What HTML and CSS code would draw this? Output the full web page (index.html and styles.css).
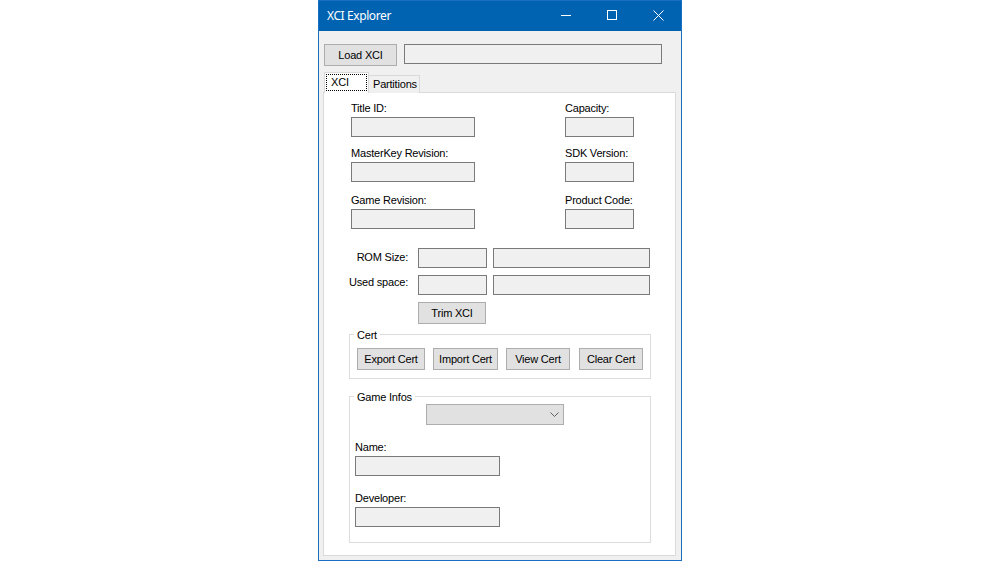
FILE: index.html
```html
<!DOCTYPE html>
<html>
<head>
<meta charset="utf-8">
<title>XCI Explorer</title>
<link rel="stylesheet" href="styles.css">
</head>
<body>
<div class="window">
  <div class="titlebar">
    <span class="title">XCI Explorer</span>
    <div class="caption">
      <span class="cap-btn"><svg width="10" height="10" viewBox="0 0 10 10"><path d="M0 5.5H10" stroke="#fff" stroke-width="1"/></svg></span>
      <span class="cap-btn"><svg width="10" height="10" viewBox="0 0 10 10"><rect x="0.5" y="0.5" width="9" height="9" fill="none" stroke="#fff" stroke-width="1"/></svg></span>
      <span class="cap-btn"><svg width="11" height="11" viewBox="0 0 11 11"><path d="M0.5 0.5L10.5 10.5M10.5 0.5L0.5 10.5" stroke="#fff" stroke-width="1"/></svg></span>
    </div>
  </div>
  <div class="client">
    <div class="toprow">
      <button class="btn btn-load">Load XCI</button>
      <div class="textbox tb-path"></div>
    </div>
    <div class="tabs">
      <div class="tab tab-active"><span class="focus">XCI</span></div>
      <div class="tab tab-inactive">Partitions</div>
    </div>
    <div class="panel">
      <div class="fields">
        <div class="col col-left">
          <div class="field"><label>Title ID:</label><div class="textbox"></div></div>
          <div class="field field-2"><label>MasterKey Revision:</label><div class="textbox"></div></div>
          <div class="field field-3"><label>Game Revision:</label><div class="textbox"></div></div>
        </div>
        <div class="col col-right">
          <div class="field"><label>Capacity:</label><div class="textbox"></div></div>
          <div class="field field-2"><label>SDK Version:</label><div class="textbox"></div></div>
          <div class="field field-3"><label>Product Code:</label><div class="textbox"></div></div>
        </div>
      </div>
      <div class="sizes">
        <div class="size-row">
          <span class="size-label label-rom">ROM Size:</span>
          <div class="textbox tb-s"></div>
          <div class="textbox tb-l"></div>
        </div>
        <div class="size-row size-row-2">
          <span class="size-label label-used">Used space:</span>
          <div class="textbox tb-s"></div>
          <div class="textbox tb-l"></div>
        </div>
        <button class="btn btn-trim">Trim XCI</button>
      </div>
      <fieldset class="group group-cert">
        <legend>Cert</legend>
        <div class="cert-buttons">
          <button class="btn btn-export">Export Cert</button>
          <button class="btn btn-import">Import Cert</button>
          <button class="btn btn-view">View Cert</button>
          <button class="btn btn-clear">Clear Cert</button>
        </div>
      </fieldset>
      <fieldset class="group group-game">
        <legend>Game Infos</legend>
        <div class="combo">
          <svg width="9" height="5" viewBox="0 0 9 5"><path d="M0.5 0.5L4.5 4.5L8.5 0.5" fill="none" stroke="#606060" stroke-width="1"/></svg>
        </div>
        <div class="info-field"><label>Name:</label><div class="textbox tb-info"></div></div>
        <div class="info-field info-field-2"><label>Developer:</label><div class="textbox tb-info"></div></div>
      </fieldset>
    </div>
  </div>
</div>
</body>
</html>
```

FILE: styles.css
```css
html, body {
  margin: 0;
  padding: 0;
}

body {
  background: #ffffff;
  display: flex;
  justify-content: center;
  font-family: "Liberation Sans", Arial, sans-serif;
  font-size: 11px;
  letter-spacing: -0.2px;
  color: #000;
}

.window {
  width: 364px;
  height: 561px;
  box-sizing: border-box;
  border: 1px solid #1a6fc4;
  display: flex;
  flex-direction: column;
}

.titlebar {
  height: 30px;
  flex: none;
  background: #0063b1;
  display: flex;
  color: #fff;
}

.title {
  flex: 1;
  padding-left: 8px;
  line-height: 30px;
  font-family: "Noto Sans", "Open Sans", sans-serif;
  font-size: 12px;
  letter-spacing: -0.4px;
}

.caption {
  display: flex;
}

.cap-btn {
  width: 46px;
  height: 30px;
  box-sizing: border-box;
  padding-top: 9px;
  display: flex;
  justify-content: center;
  align-items: flex-start;
}

.client {
  flex: 1;
  background: #f0f0f0;
  padding: 13px 0 0 4px;
}

.toprow {
  display: flex;
  align-items: flex-start;
  margin-left: 1px;
}

.btn {
  font-family: "Liberation Sans", Arial, sans-serif;
  font-size: 11px;
  letter-spacing: -0.2px;
  color: #000;
  background: #e1e1e1;
  border: 1px solid #adadad;
  box-sizing: border-box;
  padding: 0;
  margin: 0;
  height: 22px;
  line-height: 13px;
}

.btn-load {
  width: 73px;
}

.textbox {
  box-sizing: border-box;
  border: 1px solid #7a7a7a;
  background: #f0f0f0;
  height: 20px;
}

.tb-path {
  width: 258px;
  margin-left: 7px;
}

.tabs {
  display: flex;
  align-items: flex-end;
  margin: 6px 0 0 1px;
  height: 21px;
}

.tab {
  box-sizing: border-box;
  line-height: 13px;
}

.tab-active {
  position: relative;
  z-index: 1;
  width: 45px;
  height: 21px;
  border: 1px solid #d9d9d9;
  border-bottom: none;
  background: #fff;
  padding: 1px 1px 0 1px;
}

.focus {
  display: block;
  height: 17px;
  box-sizing: border-box;
  border: 1px dotted #000;
  padding-left: 4px;
  line-height: 14px;
}

.tab-inactive {
  width: 51px;
  height: 18px;
  border: 1px solid #d9d9d9;
  border-left: none;
  border-bottom: none;
  background: #f0f0f0;
  padding: 2px 0 0 4px;
}

.panel {
  margin-top: -1px;
  width: 353px;
  height: 464px;
  box-sizing: border-box;
  border: 1px solid #dadada;
  background: #fff;
  padding-top: 8px;
}

.fields {
  display: flex;
  gap: 90px;
  margin-left: 27px;
}

.col-left {
  width: 124px;
}

.col-right {
  width: 69px;
}

.field label,
.info-field label {
  display: block;
  height: 13px;
  line-height: 15px;
  white-space: nowrap;
}

.field .textbox,
.info-field .textbox {
  margin-top: 3px;
}

.field-2 {
  margin-top: 9px;
}

.field-3 {
  margin-top: 11px;
}

.sizes {
  margin-top: 19px;
}

.size-row {
  display: flex;
  align-items: flex-start;
  height: 20px;
}

.size-row-2 {
  margin-top: 7px;
}

.size-label {
  width: 84px;
  padding-right: 2px;
  text-align: right;
  line-height: 13px;
  white-space: nowrap;
}

.label-rom {
  margin-top: 3px;
}

.label-used {
  margin-top: 1px;
}

.tb-s {
  width: 69px;
  margin-left: 8px;
}

.tb-l {
  width: 157px;
  margin-left: 6px;
}

.btn-trim {
  display: block;
  width: 68px;
  margin: 7px 0 0 94px;
}

.group {
  margin: 0 0 0 25px;
  width: 302px;
  box-sizing: border-box;
  border: 1px solid #dcdcdc;
  padding: 0;
  min-inline-size: 0;
}

.group legend {
  padding: 2px 3px 0;
  margin-left: 4px;
  line-height: 13px;
  font-size: 11px;
}

.group-cert {
  margin-top: 3px;
}

.cert-buttons {
  display: flex;
  margin: 6px 0 8px 7px;
}

.btn-export {
  width: 68px;
}

.btn-import {
  width: 65px;
  margin-left: 8px;
}

.btn-view {
  width: 64px;
  margin-left: 8px;
}

.btn-clear {
  width: 64px;
  margin-left: 9px;
}

.group-game {
  margin-top: 10px;
  padding-bottom: 15px;
}

.combo {
  margin: 0 0 0 76px;
  width: 138px;
  height: 21px;
  box-sizing: border-box;
  border: 1px solid #adadad;
  background: #e1e1e1;
  display: flex;
  justify-content: flex-end;
  align-items: center;
  padding-right: 4px;
}

.info-field {
  margin: 15px 0 0 5px;
}

.tb-info {
  width: 145px;
}
```
